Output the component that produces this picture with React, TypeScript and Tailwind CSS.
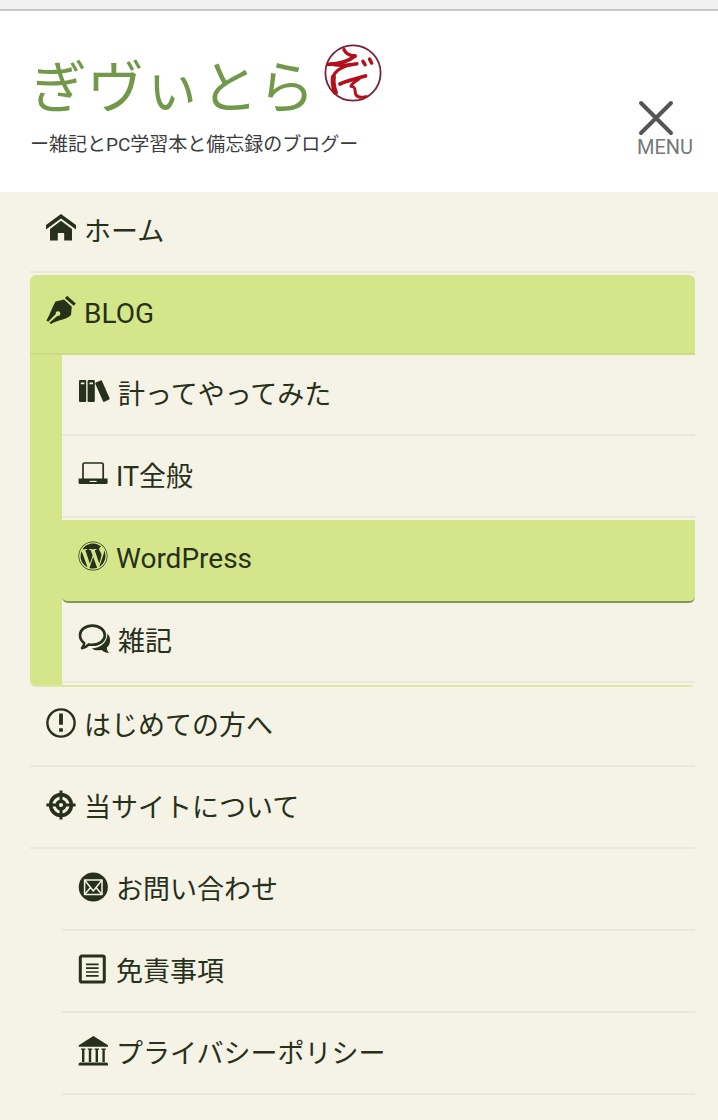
import type { ReactNode } from "react";
import { FaWordpress } from "react-icons/fa";

interface MenuItem {
  label: string;
  icon: ReactNode;
  active?: boolean;
}

const iconClass = "mb-1.5 h-[30px] w-[30px] shrink-0";
const wideIconClass = "mb-1.5 h-[30px] w-[32px] shrink-0";

function HomeIcon() {
  return (
    <svg viewBox="0 0 30 30" className={iconClass} fill="currentColor" aria-hidden="true">
      <path d="M15 0 L30 11 V15.4 L15 4.6 L0 15.4 V11 Z" />
      <path d="M15 6.8 L26 15 V26.4 H18.2 V19 H11.8 V26.4 H4 V15 Z" />
    </svg>
  );
}

function PenIcon() {
  return (
    <svg viewBox="0 0 30 30" className={iconClass} fill="currentColor" aria-hidden="true">
      <path d="M9.6 5.6 L18 3.4 L25.8 10.8 L25 19 C20 24 12 23.6 5 28 L3.4 26.8 L11.6 19.8 A2.3 2.3 0 1 0 9.8 18 L2.2 25.8 L0.4 24.6 C4 19 6 11 9.6 5.6 Z" />
      <path d="M20 1 L28.8 8.6" stroke="currentColor" strokeWidth="3.2" />
    </svg>
  );
}

function BooksIcon() {
  return (
    <svg viewBox="0 0 32 30" className={wideIconClass} fill="currentColor" aria-hidden="true">
      <path
        fillRule="evenodd"
        d="M2 3 H7.2 Q8.2 3 8.2 4 V24 Q8.2 25 7.2 25 H2 Q1 25 1 24 V4 Q1 3 2 3 Z M2.8 5.4 V7.2 H6.4 V5.4 Z"
      />
      <path
        fillRule="evenodd"
        d="M10.6 3 H15.8 Q16.8 3 16.8 4 V24 Q16.8 25 15.8 25 H10.6 Q9.6 25 9.6 24 V4 Q9.6 3 10.6 3 Z M11.4 5.4 V7.2 H15 V5.4 Z"
      />
      <path d="M17.8 5.6 L22.6 3.4 Q23.5 3 24 3.9 L31.6 21.2 Q32 22.1 31.1 22.6 L26.4 24.8 Q25.5 25.2 25 24.3 L17.4 6.9 Q17 6 17.8 5.6 Z" />
    </svg>
  );
}

function LaptopIcon() {
  return (
    <svg viewBox="0 0 30 30" className={iconClass} fill="none" aria-hidden="true">
      <rect x="5" y="4" width="20.2" height="17" rx="1.5" stroke="currentColor" strokeWidth="1.7" />
      <path
        fill="currentColor"
        fillRule="evenodd"
        d="M0.6 19.6 H29.6 V23.8 Q29.6 25 28.4 25 H1.8 Q0.6 25 0.6 23.8 Z M11.6 21.4 V23 H18.6 V21.4 Z"
      />
    </svg>
  );
}

function BubblesIcon() {
  return (
    <svg viewBox="0 0 32 30" className={wideIconClass} fill="none" aria-hidden="true">
      <path
        d="M14.4 1.6 C21.4 1.6 26.8 5.8 26.8 11.2 C26.8 16.8 21.2 20.8 14.4 20.8 C13 20.8 12 20.7 10.8 20.4 C9 22.4 7 23.8 4 24.2 C5.4 22.6 6.2 20.8 6.2 19 C3.6 17.2 2 14.4 2 11.2 C2 5.8 7.4 1.6 14.4 1.6 Z"
        stroke="currentColor"
        strokeWidth="2.6"
        strokeLinejoin="round"
      />
      <path
        fill="currentColor"
        d="M29.4 9.6 C31.6 12 32.2 14.4 32 17.2 C31.8 19.8 30.8 21.8 28.8 23.4 C28.8 25.8 29.6 27.4 31.4 29 C28 29 25.6 28 23.6 26 C19.8 26.8 16.2 26.2 13.8 24.4 C22.4 24 29.6 18.4 29.4 9.6 Z"
      />
    </svg>
  );
}

function NoticeIcon() {
  return (
    <svg viewBox="0 0 30 30" className={iconClass} fill="none" aria-hidden="true">
      <circle cx="15" cy="15" r="13.6" stroke="currentColor" strokeWidth="2.4" />
      <path d="M15 5.6 V16.8 M15 20.2 V23.8" stroke="currentColor" strokeWidth="3.8" />
    </svg>
  );
}

function TargetIcon() {
  return (
    <svg viewBox="0 0 30 30" className={iconClass} fill="none" stroke="currentColor" aria-hidden="true">
      <circle cx="15" cy="15" r="10.4" strokeWidth="3.6" />
      <circle cx="15" cy="15" r="3.8" strokeWidth="3.4" />
      <path d="M15 0.4 V12 M15 18 V29.6 M0.4 15 H12 M18 15 H29.6" strokeWidth="3" />
    </svg>
  );
}

function MailIcon() {
  return (
    <svg viewBox="0 0 30 30" className={iconClass} fill="none" aria-hidden="true">
      <circle cx="15.3" cy="15" r="14.6" fill="currentColor" />
      <g stroke="#f5f3e6" strokeWidth="1.5" strokeLinejoin="round">
        <rect x="6.6" y="8" width="17.4" height="14.6" />
        <path d="M6.6 8 L15.3 19 L24 8 M6.6 22.6 L12.6 15.4 M24 22.6 L18 15.4" />
      </g>
    </svg>
  );
}

function DocumentIcon() {
  return (
    <svg viewBox="0 0 30 30" className={iconClass} fill="none" stroke="currentColor" aria-hidden="true">
      <rect x="2.3" y="2" width="24" height="26" rx="1.6" strokeWidth="3" />
      <path d="M8 10.4 H20.6 M8 14.2 H20.6 M8 18 H20.6 M8 21.8 H20.6" strokeWidth="1.7" />
    </svg>
  );
}

function LibraryIcon() {
  return (
    <svg viewBox="0 0 30 30" className={iconClass} fill="currentColor" aria-hidden="true">
      <path d="M15.4 0 L30 9.2 V10.8 H0.8 V9.2 Z" />
      <path d="M0.6 29.4 V27.6 L2 26.4 H28.8 L30 27.6 V29.4 Z" />
      <path d="M5.2 13 V26 M12 13 V26 M18.8 13 V26 M25.6 13 V26" stroke="currentColor" strokeWidth="2.4" />
      <path
        d="M3 13.2 H7.4 M9.8 13.2 H14.2 M16.6 13.2 H21 M23.4 13.2 H27.8"
        stroke="currentColor"
        strokeWidth="1.2"
      />
    </svg>
  );
}

function Seal() {
  return (
    <svg viewBox="0 0 60 60" className="h-[60px] w-[60px]" fill="none" aria-hidden="true">
      <circle cx="30" cy="30" r="27.6" stroke="#7a2335" strokeWidth="1.8" />
      <g stroke="#b3101c" strokeLinecap="round" strokeLinejoin="round">
        <path d="M21 6.6 C22.5 10.5 26 12.5 32 13" strokeWidth="3.4" />
        <path d="M32 13 C27 17 18 21 5.5 21.4" strokeWidth="3.8" />
        <path d="M8 21 C14 23.4 24 22.4 34 20.8" strokeWidth="3.4" />
        <path d="M27 22 C17 24.5 10.5 29 9.8 36" strokeWidth="3.2" />
        <path d="M10.4 34 C9.4 40 11 45.5 12.4 49.5" strokeWidth="5" />
        <path d="M17 41 C24 37.5 34 35.5 42.5 33" strokeWidth="3.8" />
        <path d="M36 36 C31 39 28.5 41.5 28 43.2 C34 43.5 31 49 33 52 C35 54.6 39 54.6 43 53.6" strokeWidth="3" />
        <path d="M40 18.4 L42 21.6" strokeWidth="3.6" />
        <path d="M46.6 16.2 L48.6 20" strokeWidth="3.6" />
      </g>
    </svg>
  );
}

const blogItems: MenuItem[] = [
  { label: "計ってやってみた", icon: <BooksIcon /> },
  { label: "IT全般", icon: <LaptopIcon /> },
  { label: "WordPress", icon: <FaWordpress className={iconClass} />, active: true },
  { label: "雑記", icon: <BubblesIcon /> },
];

const siteItems: MenuItem[] = [
  { label: "お問い合わせ", icon: <MailIcon /> },
  { label: "免責事項", icon: <DocumentIcon /> },
  { label: "プライバシーポリシー", icon: <LibraryIcon /> },
];

function MenuLink({ item }: { item: MenuItem }) {
  const state = item.active
    ? "h-[83px] rounded-b-md border-b-2 border-[#85985a] bg-[#d5e68a] pb-1 text-[28px]"
    : "mb-[2px] h-20 border-b-2 border-[#e9e8dc]";

  return (
    <a href="#" className={`flex items-center gap-2 pl-4 ${state}`}>
      {item.icon}
      <span>{item.label}</span>
    </a>
  );
}

function App() {
  return (
    <div className="flex min-h-screen flex-col bg-[#f5f3e6] font-[Roboto,'Noto_Sans_CJK_JP',sans-serif] text-[#26301a]">
      <div className="h-[11px] border-b-2 border-[#c8c8c8] bg-[#f0f0f0]" />

      <header className="flex h-[181px] items-start justify-between bg-white pr-[25px] pl-[30px]">
        <div className="pt-8">
          <a href="#" className="flex items-start gap-2">
            <h1 className="pt-5 text-[57px] leading-[52px] font-normal text-[#72994a]">ぎヴぃとら</h1>
            <Seal />
          </a>
          <p className="mt-4 text-[19px] leading-7 text-[#3c3c3c]">
            ー雑記とPC学習本と備忘録のブログー
          </p>
        </div>
        <button type="button" className="mt-[89px] flex flex-col items-start text-[#777]">
          <svg viewBox="0 0 38 36" className="h-9 w-[38px]" aria-hidden="true">
            <path d="M4 3 L34 33 M34 3 L4 33" stroke="#555" strokeWidth="4" strokeLinecap="round" />
          </svg>
          <span className="text-[20px] leading-[22px]">MENU</span>
        </button>
      </header>

      <nav className="pt-px pr-[23px] pl-[30px] text-[27px] leading-10">
        <ul>
          <li>
            <MenuLink item={{ label: "ホーム", icon: <HomeIcon /> }} />
          </li>
          <li className="rounded-md border-b-2 border-[#dce8a6] bg-[#d5e68a]">
            <a href="#" className="flex h-20 items-center gap-2 border-b-2 border-[#cbdb88] pl-4 text-[28px]">
              <PenIcon />
              <span>BLOG</span>
            </a>
            <ul className="ml-8 flow-root bg-[#f5f3e6] pt-px">
              {blogItems.map((item) => (
                <li key={item.label}>
                  <MenuLink item={item} />
                </li>
              ))}
            </ul>
          </li>
          <li>
            <MenuLink item={{ label: "はじめての方へ", icon: <NoticeIcon /> }} />
          </li>
          <li>
            <MenuLink item={{ label: "当サイトについて", icon: <TargetIcon /> }} />
            <ul className="pl-8">
              {siteItems.map((item) => (
                <li key={item.label}>
                  <MenuLink item={item} />
                </li>
              ))}
            </ul>
          </li>
        </ul>
      </nav>
    </div>
  );
}

export default App;
